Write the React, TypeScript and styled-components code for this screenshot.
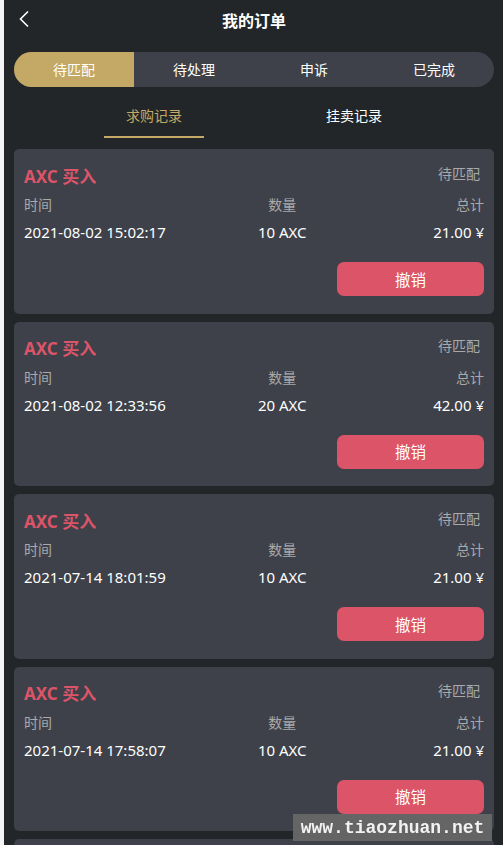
import React from "react";
import styled, { createGlobalStyle } from "styled-components";

const Global = createGlobalStyle`
  html, body { margin: 0; padding: 0; background: #f4f4f4; }
  body { font-family: "Noto Sans", "Noto Sans CJK SC", sans-serif; }
  * { box-sizing: border-box; }
`;

const Page = styled.div`
  margin-left: 4px;
  background: #222628;
  padding: 0 9px 0 10px;
  overflow: hidden;
  height: 845px;
`;

const Header = styled.div`
  position: relative;
  height: 40px;
  display: flex;
  align-items: center;
  justify-content: center;
`;

const Back = styled.div`
  position: absolute;
  left: 3px;
  top: 10px;
  width: 14px;
  height: 18px;
  display: flex;
`;

const Title = styled.div`
  color: #fff;
  font-size: 16px;
  font-weight: 700;
`;

const Tabs = styled.div`
  margin-top: 12px;
  height: 35px;
  border-radius: 18px;
  background: #3e4149;
  display: grid;
  grid-template-columns: repeat(4, 1fr);
  overflow: hidden;
`;

const Tab = styled.div<{ $active?: boolean }>`
  display: flex;
  align-items: center;
  justify-content: center;
  color: #fff;
  font-size: 14px;
  padding-bottom: 2px;
  background: ${(p) => (p.$active ? "#c4a866" : "transparent")};
`;

const SubTabs = styled.div`
  display: flex;
  justify-content: center;
  height: 51px;
`;

const SubTab = styled.div<{ $active?: boolean }>`
  width: 200px;
  display: flex;
  flex-direction: column;
  align-items: center;
  padding-top: 18px;
  font-size: 14px;
  color: ${(p) => (p.$active ? "#c4a866" : "#fff")};
`;

const Underline = styled.div`
  margin-top: 11px;
  width: 100px;
  height: 2px;
  background: #c4a866;
`;

const List = styled.div`
  margin-top: 11px;
  display: flex;
  flex-direction: column;
  gap: 8px;
`;

const Card = styled.div`
  background: #3e4149;
  border-radius: 5px;
  padding: 15px 10px 16px 10px;
  height: 164.5px;
  flex: none;
  display: flex;
  flex-direction: column;
`;

const TopRow = styled.div`
  display: flex;
  justify-content: space-between;
  align-items: center;
  height: 22px;
`;

const Kind = styled.div`
  color: #dc5468;
  font-size: 17px;
  font-weight: 700;
`;

const Status = styled.div`
  color: #a9a9a9;
  font-size: 14px;
  margin-right: 4px;
  margin-top: -5px;
`;

const Grid = styled.div<{ $muted?: boolean; $gap: number; $size: number }>`
  display: grid;
  grid-template-columns: 1.42fr 1fr 1fr;
  margin-top: ${(p) => p.$gap}px;
  line-height: 20px;
  font-size: ${(p) => p.$size}px;
  color: ${(p) => (p.$muted ? "#a9a9a9" : "#fff")};
`;

const Cell = styled.div<{ $align: "left" | "center" | "right" }>`
  text-align: ${(p) => p.$align};
  white-space: pre;
`;

const Actions = styled.div`
  margin-top: 20px;
  display: flex;
  justify-content: flex-end;
`;

const CancelBtn = styled.button`
  width: 147px;
  height: 34px;
  border: none;
  border-radius: 7px;
  background: #dc5468;
  color: #fff;
  font-family: inherit;
  font-size: 15.5px;
  padding: 0;
`;

const Watermark = styled.div`
  position: fixed;
  left: 293px;
  top: 814px;
  width: 199px;
  height: 27px;
  background: rgba(102, 102, 102, 0.97);
  color: #f2f2f2;
  font-family: "Liberation Mono", monospace;
  font-weight: 700;
  font-size: 18px;
  display: flex;
  align-items: center;
  justify-content: center;
`;

const orders = [
  { time: "2021-08-02 15:02:17", qty: "10 AXC", total: "21.00 ¥" },
  { time: "2021-08-02 12:33:56", qty: "20 AXC", total: "42.00 ¥" },
  { time: "2021-07-14 18:01:59", qty: "10 AXC", total: "21.00 ¥" },
  { time: "2021-07-14 17:58:07", qty: "10 AXC", total: "21.00 ¥" },
];

export default function App() {
  return (
    <>
      <Global />
      <Page>
        <Header>
          <Back>
            <svg width="14" height="18" viewBox="0 0 14 18">
              <path d="M11 1.5 L3.5 9 L11 16.5" fill="none" stroke="#fff" strokeWidth="1.6" />
            </svg>
          </Back>
          <Title>我的订单</Title>
        </Header>
        <Tabs>
          <Tab $active>待匹配</Tab>
          <Tab>待处理</Tab>
          <Tab>申诉</Tab>
          <Tab>已完成</Tab>
        </Tabs>
        <SubTabs>
          <SubTab $active>
            求购记录
            <Underline />
          </SubTab>
          <SubTab>挂卖记录</SubTab>
        </SubTabs>
        <List>
          {orders.map((o, i) => (
            <Card key={i}>
              <TopRow>
                <Kind>AXC 买入</Kind>
                <Status>待匹配</Status>
              </TopRow>
              <Grid $muted $gap={9} $size={14}>
                <Cell $align="left">时间</Cell>
                <Cell $align="center">数量</Cell>
                <Cell $align="right">总计</Cell>
              </Grid>
              <Grid $gap={7} $size={15}>
                <Cell $align="left">{o.time}</Cell>
                <Cell $align="center">{o.qty}</Cell>
                <Cell $align="right">{o.total}</Cell>
              </Grid>
              <Actions>
                <CancelBtn>撤销</CancelBtn>
              </Actions>
            </Card>
          ))}
          <Card aria-hidden />
        </List>
      </Page>
      <Watermark>www.tiaozhuan.net</Watermark>
    </>
  );
}
